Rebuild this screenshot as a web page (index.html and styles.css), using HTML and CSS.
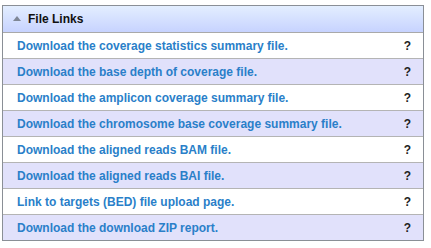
FILE: index.html
```html
<!DOCTYPE html>
<html>
<head>
<meta charset="utf-8">
<link rel="stylesheet" href="styles.css">
</head>
<body>
<div class="panel">
  <div class="head">
    <svg class="arrow" width="8" height="5" viewBox="0 0 8 5"><polygon points="0,5 8,5 4,0" fill="#7f8796"/></svg>
    <span class="title">File Links</span>
  </div>
  <div class="row"><a class="link">Download the coverage statistics summary file.</a><span class="q">?</span></div>
  <div class="row alt"><a class="link">Download the base depth of coverage file.</a><span class="q">?</span></div>
  <div class="row"><a class="link">Download the amplicon coverage summary file.</a><span class="q">?</span></div>
  <div class="row alt"><a class="link">Download the chromosome base coverage summary file.</a><span class="q">?</span></div>
  <div class="row"><a class="link">Download the aligned reads BAM file.</a><span class="q">?</span></div>
  <div class="row alt"><a class="link">Download the aligned reads BAI file.</a><span class="q">?</span></div>
  <div class="row"><a class="link">Link to targets (BED) file upload page.</a><span class="q">?</span></div>
  <div class="row alt last"><a class="link">Download the download ZIP report.</a><span class="q">?</span></div>
</div>
</body>
</html>
```
FILE: styles.css
```css
html, body { margin: 0; padding: 0; background: #fff; }
body { font-family: "Liberation Sans", Arial, sans-serif; }
.panel {
  margin: 5px 0 0 2px;
  width: 420px;
  border: 1px solid #8a8f96;
}
.head {
  height: 26px;
  display: flex;
  align-items: center;
  background: linear-gradient(#e3eeff, #c7d3ff);
  border-bottom: 1px solid #a9a9a9;
}
.arrow { margin-left: 10px; margin-right: 7px; margin-top: -1px; }
.title { font-size: 12px; font-weight: bold; color: #111; }
.row {
  height: 25px;
  display: flex;
  align-items: center;
  justify-content: space-between;
  border-bottom: 1px solid #b4b4b4;
  background: #fff;
}
.row.alt { background: #e1e1fb; }
.row.last { border-bottom: none; }
.link {
  margin-left: 14px;
  font-size: 12px;
  font-weight: bold;
  color: #2a7fc9;
}
.q {
  margin-right: 12px;
  font-size: 12px;
  font-weight: bold;
  color: #222;
}
```
